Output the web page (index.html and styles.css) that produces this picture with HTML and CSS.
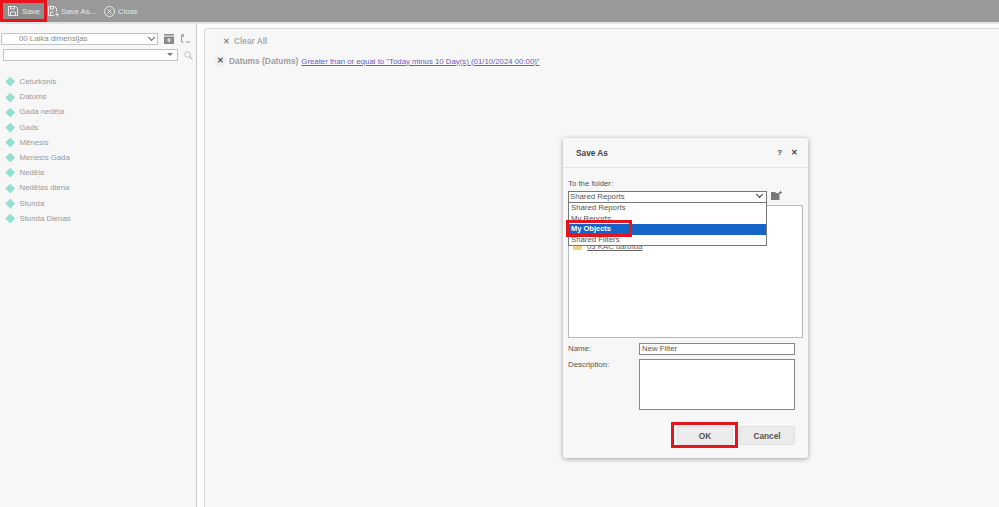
FILE: index.html
```html
<!DOCTYPE html>
<html lang="en">

<head>
  <meta charset="UTF-8" />
  <title>Save As</title>
  <link rel="stylesheet" href="styles.css">
</head>

<body>
  <div class="toolbar">
    <button class="tool tool-save">
      <svg width="10" height="10" viewBox="0 0 10 10"><path d="M.5.5h7l2 2v7h-9z M2.500.5v2.500h4v-2.500 M2.500 9.500v-3.500h5v3.500" fill="none" stroke="#e8e8e8"/></svg>
      Save
    </button>
    <button class="tool tool-saveas">
      <svg width="11" height="11" viewBox="0 0 11 11"><path d="M.5.5h6l2 2v3 M6 9.500h-5.500v-9 M2.500.5v2.500h3v-2.500 M2.500 9.500v-3.500h3" fill="none" stroke="#e8e8e8"/><path d="M7 8.500h4M9 6.500v4" stroke="#e8e8e8"/></svg>
      Save As...
    </button>
    <button class="tool tool-close">
      <svg width="11" height="11" viewBox="0 0 11 11"><circle cx="5.500" cy="5.500" r="5" fill="none" stroke="#e8e8e8"/><path d="M3.500 3.500l4 4M7.500 3.500l-4 4" stroke="#e8e8e8"/></svg>
      Close
    </button>
  </div>

  <div class="workspace">
    <div class="sidebar">
      <div class="picker-row">
        <div class="picker picker-dim">00 Laika dimensijas<span class="chevron"></span></div>
        <svg width="10" height="10" viewBox="0 0 10 10"><path d="M0 0h10v10H0z" fill="#8a8a8a"/><path d="M0 2h10" stroke="#f7f7f7"/><path d="M5 4v4.500M3 6h4" stroke="#f7f7f7"/></svg>
        <svg width="10" height="10" viewBox="0 0 10 10"><path d="M1.500.5h2v2h-2zM1.500 3v5h2M6 8h4" fill="none" stroke="#999"/></svg>
      </div>
      <div class="picker-row">
        <div class="picker picker-search"><span class="caret"></span></div>
        <svg width="9" height="9" viewBox="0 0 9 9"><circle cx="3.500" cy="3.500" r="2.800" fill="none" stroke="#c0c0c0"/><path d="M5.500 5.500l3 3" stroke="#c0c0c0" stroke-width="1.300"/></svg>
      </div>
      <ul class="fields">
        <li>Ceturksnis</li>
        <li>Datums</li>
        <li>Gada nedēļa</li>
        <li>Gads</li>
        <li>Mēnesis</li>
        <li>Menesis Gada</li>
        <li>Nedēļa</li>
        <li>Nedēļas diena</li>
        <li>Stunda</li>
        <li>Stunda Dienas</li>
      </ul>
    </div>

    <div class="main">
      <div class="clear-all"><span class="cross">✕</span>Clear All</div>
      <div class="filter">
        <span class="filter-x">✕</span>
        <span class="filter-name">Datums (Datums)</span>
        <a class="filter-link">Greater than or equal to "Today minus 10 Day(s) (01/10/2024 00:00)"</a>
      </div>
    </div>
  </div>

  <div class="dialog">
    <div class="dialog-head">
      <span class="dialog-title">Save As</span>
      <span class="dialog-help">?</span>
      <span class="dialog-close">✕</span>
    </div>
    <div class="dialog-body">
      <div class="label">To the folder:</div>
      <div class="folder-row">
        <div class="folder-select">Shared Reports<span class="chevron chevron-dark"></span></div>
        <svg class="new-folder" width="11" height="9" viewBox="0 0 11 9"><path d="M0 1h4l1 1h3.500v7H0z" fill="#777"/><path d="M8 1.500h3M9.500 0v3" stroke="#777"/></svg>
      </div>
      <div class="tree">
        <a class="tree-item"><span class="folder-icon"></span>03 KAC darbība</a>
      </div>
      <div class="name-row">
        <label class="label">Name:</label>
        <div class="input">New Filter</div>
      </div>
      <div class="desc-row">
        <label class="label">Description:</label>
        <div class="textarea"></div>
      </div>
      <div class="buttons">
        <button class="btn">OK</button>
        <button class="btn">Cancel</button>
      </div>
    </div>

    <ul class="folder-menu">
      <li>Shared Reports</li>
      <li>My Reports</li>
      <li class="active">My Objects</li>
      <li>Shared Filters</li>
    </ul>
    <div class="mark mark-objects"></div>
    <div class="mark mark-ok"></div>
  </div>

  <div class="mark mark-save"></div>
</body>

</html>
```

FILE: styles.css
```css
* {
  box-sizing: border-box;
}

html,
body {
  margin: 0;
  height: 100%;
  overflow: hidden;
}

body {
  display: flex;
  flex-direction: column;
  position: relative;
  background: #fcfcfc;
  font-family: "Liberation Sans", Arial, sans-serif;
  font-size: 7.800px;
  color: #666;
}

.toolbar {
  height: 22px;
  background: #999;
  display: flex;
  align-items: center;
  flex: none;
}

.tool {
  height: 20px;
  padding: 0;
  display: flex;
  align-items: center;
  appearance: none;
  border: none;
  background: none;
  color: #e6e6e6;
  font: inherit;
}

.tool-save {
  width: 47px;
  padding-left: 8px;
  gap: 4px;
  background: #8e8e8e;
}

.tool-saveas {
  margin-left: 1px;
  width: 56px;
  gap: 2px;
}

.tool-close {
  gap: 3px;
}

.workspace {
  flex: 1;
  display: flex;
  min-height: 0;
  border-top: 2px solid #e4e4e4;
}

.sidebar {
  width: 197px;
  padding: 9px 0 0 1px;
  background: #f7f7f7;
  border-right: 1px solid #c9c9c9;
  flex: none;
}

.picker-row {
  display: flex;
  align-items: center;
  gap: 6px;
  margin-bottom: 4px;
}

.picker {
  height: 12px;
  background: #fff;
  border: 1px solid #c4c4c4;
  position: relative;
  color: #8a8a8a;
  line-height: 10px;
}

.picker-dim {
  width: 157px;
  padding-left: 17px;
}

.picker-search {
  width: 175px;
  margin-left: 2px;
}

.chevron {
  position: absolute;
  right: 3px;
  top: 1px;
  width: 5px;
  height: 5px;
  border-right: 1px solid #666;
  border-bottom: 1px solid #666;
  transform: rotate(45deg);
}

.chevron-dark {
  right: 4px;
  top: 0;
  border-color: #333;
  border-width: 1.500px;
}

.caret {
  position: absolute;
  right: 4px;
  top: 3px;
  border: 3px solid transparent;
  border-top: 3px solid #777;
}

.fields {
  margin: 13px 0 0;
  padding: 0 0 0 5px;
  list-style: none;
}

.fields li {
  height: 15.200px;
  display: flex;
  align-items: center;
  gap: 5px;
  color: #9a9a9a;
}

.fields li::before {
  content: "";
  width: 6.500px;
  height: 6.500px;
  margin: 0 1px;
  background: #93e0d2;
  transform: rotate(45deg);
}

.main {
  flex: 1;
  margin: 4px 0 0 7px;
  padding: 7px 0 0 12px;
  background: #f7f7f7;
  border-left: 1px solid #dcdcdc;
  border-top: 1px solid #dcdcdc;
  border-top-left-radius: 3px;
}

.clear-all {
  display: flex;
  align-items: center;
  margin-left: 6px;
  gap: 4px;
  font-weight: 700;
  font-size: 8.300px;
  color: #aaa;
}

.cross {
  color: #888;
}

.filter {
  display: flex;
  align-items: center;
  gap: 3px;
  margin-top: 9px;
  margin-left: -3px;
}

.filter-x {
  width: 12px;
  height: 12px;
  border-radius: 50%;
  background: #eee;
  color: #555;
  font-weight: 700;
  line-height: 12px;
  text-align: center;
}

.filter-name {
  font-weight: 700;
  font-size: 8.400px;
  color: #a0a0a0;
}

.filter-link {
  color: #6a5fc4;
  text-decoration: underline;
}

.dialog {
  position: absolute;
  left: 563px;
  top: 138px;
  width: 245px;
  height: 320px;
  background: #f7f7f7;
  border-radius: 3px;
  box-shadow: 0 1px 5px rgba(0, 0, 0, 0.35);
}

.dialog-head {
  height: 30px;
  display: flex;
  align-items: center;
  padding: 0 10px 0 13px;
  border-bottom: 1px solid #e4e4e4;
  color: #444;
}

.dialog-title {
  flex: 1;
  font-weight: 700;
  font-size: 8.300px;
}

.dialog-help {
  font-weight: 700;
  margin-right: 9px;
}

.dialog-close {
  font-weight: 700;
}

.dialog-body {
  padding: 11px 5px 0;
}

.label {
  color: #555;
  line-height: 10px;
}

.folder-row {
  display: flex;
  align-items: center;
  gap: 4px;
  margin-top: 2px;
}

.new-folder {
  margin-top: -3px;
}

.folder-select {
  width: 199px;
  height: 12px;
  padding-left: 1px;
  background: #fff;
  border: 1px solid #777;
  position: relative;
  line-height: 10px;
  color: #555;
}

.tree {
  height: 133px;
  margin-top: 2px;
  padding: 36px 0 0 4px;
  background: #fff;
  border: 1px solid #bbb;
  width: 235px;
}

.tree-item {
  display: flex;
  align-items: center;
  gap: 5px;
  color: #666;
  text-decoration: underline;
}

.folder-icon {
  width: 9px;
  height: 6px;
  background: #f0d27a;
}

.name-row {
  display: flex;
  align-items: center;
  margin-top: 5px;
}

.name-row .label,
.desc-row .label {
  width: 71px;
}

.input {
  width: 156px;
  height: 12px;
  padding-left: 2px;
  background: #fff;
  border: 1px solid #888;
  line-height: 10px;
  color: #555;
}

.desc-row {
  display: flex;
  align-items: flex-start;
  margin-top: 4px;
}

.desc-row .label {
  margin-top: 1px;
}

.textarea {
  width: 156px;
  height: 51px;
  background: #fff;
  border: 1px solid #888;
}

.buttons {
  display: flex;
  justify-content: flex-end;
  gap: 6px;
  margin: 16px 8px 0 0;
}

.btn {
  width: 56px;
  height: 19px;
  padding: 0;
  appearance: none;
  background: #ececec;
  border: 1px solid #e0e0e0;
  border-radius: 2px;
  color: #555;
  font: inherit;
  font-weight: 700;
  font-size: 8.300px;
}

.folder-menu {
  position: absolute;
  left: 5px;
  top: 65px;
  width: 199px;
  margin: 0;
  padding: 0;
  list-style: none;
  background: #fff;
  border: 1px solid #777;
  border-top: none;
  color: #555;
}

.folder-menu li {
  height: 10.500px;
  padding-left: 2px;
  line-height: 10.500px;
}

.folder-menu .active {
  background: #1565c8;
  color: #fff;
  font-weight: 700;
  font-size: 7.500px;
}

.mark {
  position: absolute;
  border: 3px solid #e8141c;
}

.mark-save {
  left: 0;
  top: 0;
  width: 47px;
  height: 22px;
}

.mark-objects {
  left: 3px;
  top: 82px;
  width: 66px;
  height: 17px;
}

.mark-ok {
  left: 108px;
  top: 284px;
  width: 67px;
  height: 26px;
}
```
